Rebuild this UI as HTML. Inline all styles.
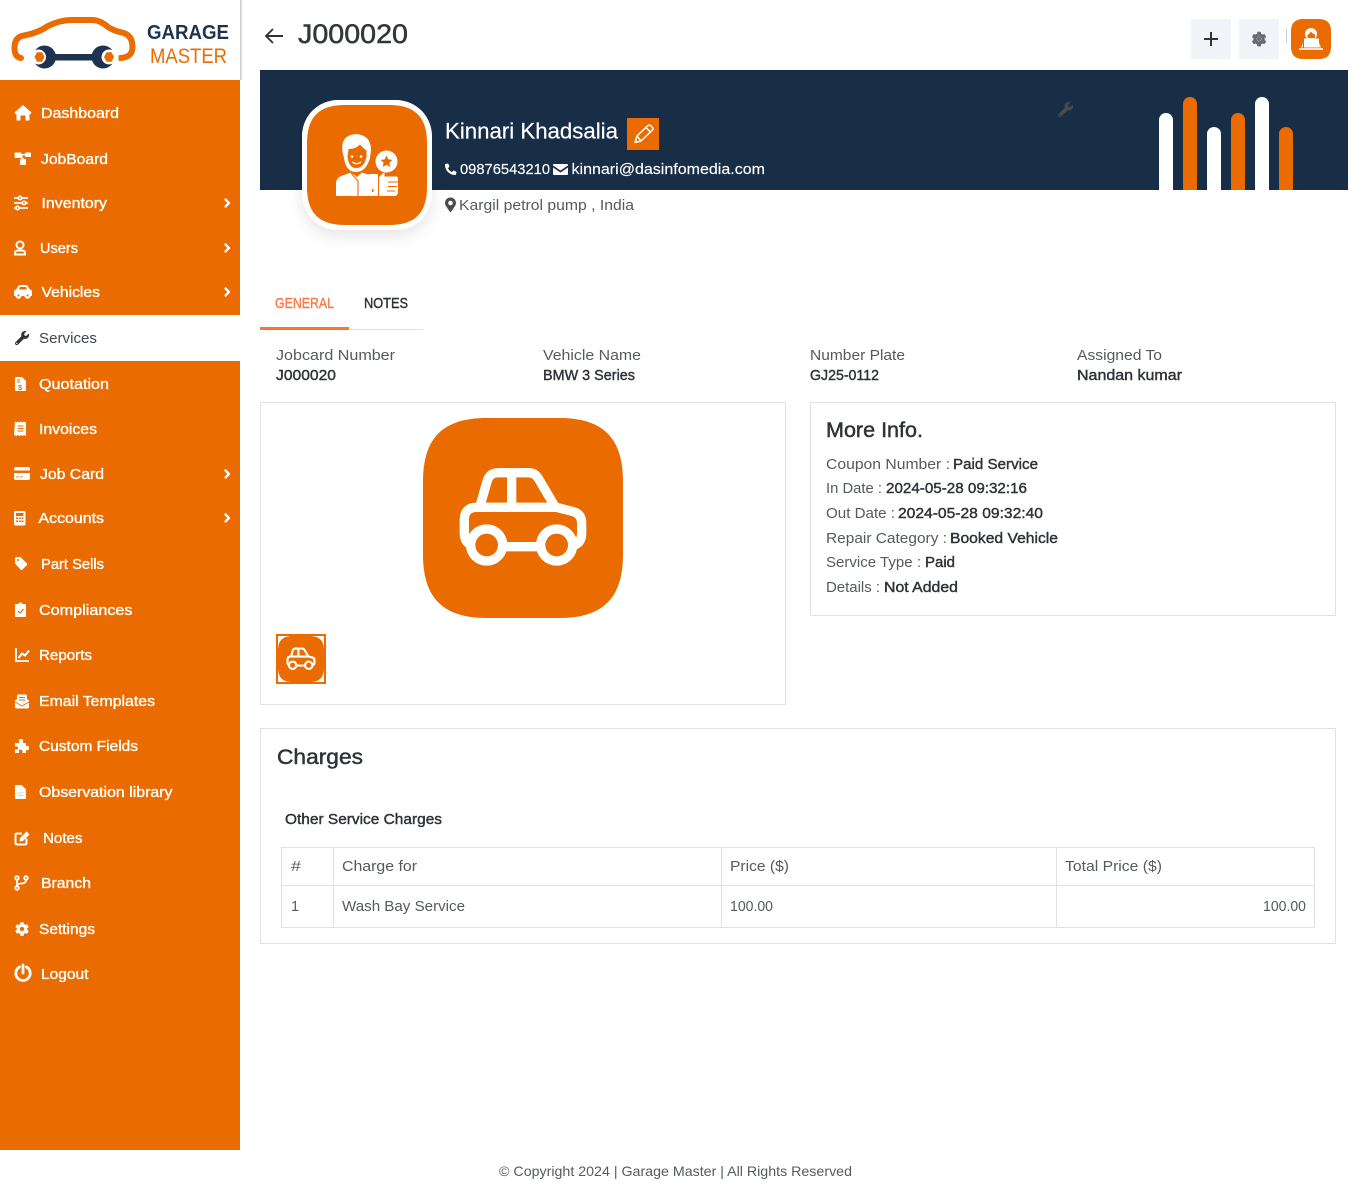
<!DOCTYPE html>
<html lang="en"><head><meta charset="utf-8"><title>J000020 - Garage Master</title>
<style>
html,body{margin:0;padding:0;background:#fff;width:1366px;height:1190px;overflow:hidden}
svg{display:block}
text{font-family:"Liberation Sans",sans-serif;white-space:pre}
.n{font-size:14.5px;fill:#fff;stroke:#fff;stroke-width:.35}
.l{font-size:14.5px;fill:#555a60}
.v{font-size:14.5px;fill:#2e3238;stroke:#2e3238;stroke-width:.4}
.h{font-size:21px;fill:#2e3238;stroke:#2e3238;stroke-width:.45}
</style></head><body>
<svg width="1366" height="1190" viewBox="0 0 1366 1190" xmlns="http://www.w3.org/2000/svg">
<defs>
<linearGradient id="sh"><stop offset="0" stop-color="#c8c8c8"/><stop offset="1" stop-color="#fff"/></linearGradient>
<filter id="ps" x="-30%" y="-30%" width="160%" height="160%"><feDropShadow dx="0" dy="6" stdDeviation="7" flood-color="#000" flood-opacity=".1"/></filter>
<path id="sq" d="M190 0H410C540 0 600 60 600 190V410C600 540 540 600 410 600H190C60 600 0 540 0 410V190C0 60 60 0 190 0Z"/>
<symbol id="car" viewBox="69 54 600 600">
<g fill="none" stroke="#fff" stroke-width="28" stroke-linecap="round" stroke-linejoin="round">
<path d="M241 315L261 245Q268 218 295 218H385Q405 218 415 235L462 315"/>
<path d="M335 218V322"/>
<path d="M205 430Q193 420 193 400V360Q193 322 230 322H470L520 335Q545 342 545 370V400Q545 425 525 435"/>
<path d="M318 440H410"/>
<circle cx="260" cy="435" r="48"/><circle cx="470" cy="435" r="48"/>
</g></symbol>
<path id="wr" d="M507.73 109.1c-2.24-9.03-13.54-12.09-20.12-5.51l-74.36 74.36-67.88-11.31-11.31-67.88 74.36-74.36c6.62-6.62 3.43-17.9-5.66-20.16-47.38-11.74-99.55.91-136.58 37.93-39.64 39.64-50.55 97.1-34.05 147.2L18.74 402.76c-24.99 24.99-24.99 65.51 0 90.5 24.99 24.99 65.51 24.99 90.5 0l213.21-213.21c50.12 16.71 107.47 5.68 147.37-34.22 37.07-37.07 49.7-89.32 37.91-136.73zM64 472c-13.25 0-24-10.75-24-24 0-13.26 10.75-24 24-24s24 10.74 24 24c0 13.25-10.75 24-24 24z"/>
<path id="cog" d="M487.4 315.7l-42.6-24.6c4.3-23.2 4.3-47 0-70.2l42.6-24.6c4.9-2.8 7.1-8.6 5.5-14-11.1-35.6-30-67.8-54.7-94.6-3.8-4.1-10-5.1-14.8-2.3L380.8 110c-17.9-15.4-38.5-27.3-60.8-35.1V25.8c0-5.6-3.9-10.5-9.4-11.7-36.7-8.2-74.3-7.8-109.2 0-5.5 1.2-9.4 6.1-9.4 11.7V75c-22.2 7.9-42.8 19.8-60.8 35.1L88.7 85.5c-4.9-2.8-11-1.9-14.8 2.3-24.7 26.7-43.6 58.9-54.7 94.6-1.7 5.4.6 11.2 5.5 14L67.3 221c-4.3 23.2-4.3 47 0 70.2l-42.6 24.6c-4.9 2.8-7.1 8.6-5.5 14 11.1 35.6 30 67.8 54.7 94.6 3.8 4.1 10 5.1 14.8 2.3l42.6-24.6c17.9 15.4 38.5 27.3 60.8 35.1v49.2c0 5.6 3.9 10.5 9.4 11.7 36.7 8.2 74.3 7.8 109.2 0 5.5-1.2 9.4-6.1 9.4-11.7v-49.2c22.2-7.9 42.8-19.8 60.8-35.1l42.6 24.6c4.9 2.8 11 1.9 14.8-2.3 24.7-26.7 43.6-58.9 54.7-94.6 1.5-5.5-.7-11.3-5.6-14.1zM256 336c-44.1 0-80-35.9-80-80s35.9-80 80-80 80 35.9 80 80-35.9 80-80 80z"/>
</defs>

<!-- logo -->
<rect x="240" y="0" width="3" height="80" fill="url(#sh)"/>
<path d="M21 58Q14.500 57 14.500 48Q14.500 37 24 35.500Q38 33 48 26Q60 20 72 20H92Q100 20 108 27Q114 31 122 32.500Q132.500 35 132.500 47Q132.500 57.500 120 58" fill="none" stroke="#ea6c00" stroke-width="6" stroke-linecap="round"/>
<rect x="50" y="54" width="46" height="6.500" fill="#1d3350"/>
<circle cx="44.500" cy="57" r="11.500" fill="#1d3350"/>
<circle cx="38.500" cy="57" r="7.500" fill="#fff"/>
<circle cx="103" cy="57" r="11.500" fill="#1d3350"/>
<circle cx="109" cy="57" r="7.500" fill="#fff"/>
<rect x="29" y="50" width="5" height="14" fill="#fff"/><rect x="113.500" y="50" width="5" height="14" fill="#fff"/>
<path d="M34.500 57l2.500-4.800h5l2.500 4.800-2.500 4.800h-5z" fill="#ea6c00"/>
<path d="M104 57l2.500-4.800h5l2.500 4.800-2.500 4.800h-5z" fill="#ea6c00"/>
<text x="147" y="39" font-size="20.500" font-weight="700" fill="#1d3350" textLength="82" lengthAdjust="spacingAndGlyphs">GARAGE</text>
<text x="150" y="63" font-size="21" fill="#ea6c00" textLength="77" lengthAdjust="spacingAndGlyphs">MASTER</text>

<!-- sidebar -->
<rect x="0" y="80" width="240" height="1070" fill="#ea6c00"/>
<rect x="0" y="315" width="240" height="46" fill="#fff"/>
<g class="nav">
<text class="n" x="41" y="118" textLength="78" lengthAdjust="spacingAndGlyphs">Dashboard</text>
<text class="n" x="41" y="164" textLength="67" lengthAdjust="spacingAndGlyphs">JobBoard</text>
<text class="n" x="41.500" y="208" textLength="65.500" lengthAdjust="spacingAndGlyphs">Inventory</text>
<text class="n" x="40" y="253" textLength="38" lengthAdjust="spacingAndGlyphs">Users</text>
<text class="n" x="41.500" y="297" textLength="58.500" lengthAdjust="spacingAndGlyphs">Vehicles</text>
<text x="39" y="343" font-size="14.500" fill="#3f4652" textLength="58" lengthAdjust="spacingAndGlyphs">Services</text>
<text class="n" x="39" y="389" textLength="70" lengthAdjust="spacingAndGlyphs">Quotation</text>
<text class="n" x="39" y="434" textLength="58" lengthAdjust="spacingAndGlyphs">Invoices</text>
<text class="n" x="40" y="479" textLength="64" lengthAdjust="spacingAndGlyphs">Job Card</text>
<text class="n" x="38.500" y="523" textLength="65.500" lengthAdjust="spacingAndGlyphs">Accounts</text>
<text class="n" x="41" y="569" textLength="63" lengthAdjust="spacingAndGlyphs">Part Sells</text>
<text class="n" x="39" y="615" textLength="93.500" lengthAdjust="spacingAndGlyphs">Compliances</text>
<text class="n" x="39" y="660" textLength="53" lengthAdjust="spacingAndGlyphs">Reports</text>
<text class="n" x="39" y="706" textLength="116" lengthAdjust="spacingAndGlyphs">Email Templates</text>
<text class="n" x="39" y="751" textLength="99" lengthAdjust="spacingAndGlyphs">Custom Fields</text>
<text class="n" x="39" y="797" textLength="133.500" lengthAdjust="spacingAndGlyphs">Observation library</text>
<text class="n" x="43" y="843" textLength="39.500" lengthAdjust="spacingAndGlyphs">Notes</text>
<text class="n" x="41" y="888" textLength="50" lengthAdjust="spacingAndGlyphs">Branch</text>
<text class="n" x="39" y="934" textLength="56" lengthAdjust="spacingAndGlyphs">Settings</text>
<text class="n" x="41" y="979" textLength="47.500" lengthAdjust="spacingAndGlyphs">Logout</text>
</g>

<!-- sidebar icons -->
<path d="M14.500 112.500L23 105L31.500 112.500L30 114.500L29.500 114V120.500H25.500V115.500H20.500V120.500H16.500V114L16 114.500Z" fill="#fff"/>
<g fill="#fff"><rect x="14.500" y="152.500" width="7" height="5.500" rx="1"/><rect x="25" y="152.500" width="6" height="4.500" rx="1"/><rect x="20" y="159" width="6" height="6" rx="1"/><path d="M21 154h5v1.500h-5zM20 156l1.500-1 3 5-1.500 1z"/></g>
<g stroke="#fff" stroke-width="1.700" fill="#ea6c00"><path d="M14 198H28M14 203H28M14 208H28"/><circle cx="20" cy="198" r="1.700"/><circle cx="24" cy="203" r="1.700"/><circle cx="17.500" cy="208" r="1.700"/></g>
<g fill="none" stroke="#fff" stroke-width="2"><circle cx="20" cy="245" r="3.500"/><path d="M15 254.500V253Q15 250.500 18 250.500H22Q25 250.500 25 253V254.500Z"/></g>
<g fill="#fff"><path d="M14 296V292Q14 290 16 289.500L18 286.500Q18.500 285 20 285H26Q27.500 285 28 286.500L30 289.500Q32 290 32 292V296Z"/><circle cx="18.500" cy="295.500" r="3.200"/><circle cx="27.500" cy="295.500" r="3.200"/></g>
<path d="M19 289.500L20 287H26L27 289.500Z" fill="#ea6c00"/><circle cx="18.500" cy="295.500" r="1" fill="#ea6c00"/><circle cx="27.500" cy="295.500" r="1" fill="#ea6c00"/>
<use href="#wr" transform="translate(15 331) scale(.0275)" fill="#2d3238"/>
<path d="M15 378.500Q15 377 16.500 377H22L26 381V390Q26 391 25 391H16Q15 391 15 390Z" fill="#fff"/>
<path d="M17 379.500h3v1h-3zM17 381.500h3v1h-3z" fill="#ea6c00"/><text x="18" y="390" font-size="7.500" font-weight="700" fill="#ea6c00">$</text>
<path d="M15 421.500l1.500 1 1.500-1 1.500 1 1.500-1 1.500 1 1.500-1 1.500 1 .5-1V436l-2-1-1.500 1-1.500-1-1.500 1-1.500-1-1.500 1-1.500-1-1 1Z" fill="#fff"/>
<path d="M17.500 425.500h6v1h-6zM17.500 428h6v1h-6zM17.500 430.500h6v1h-6z" fill="#ea6c00"/>
<rect x="14" y="467" width="16" height="13" rx="2" fill="#fff"/><path d="M14 470.500h16v2.500H14z" fill="#ea6c00"/><path d="M16 476.500h3v.8h-3zM20 476.500h3v.8h-3z" fill="#ea6c00"/>
<rect x="14" y="511" width="11.500" height="14.500" rx="1.500" fill="#fff"/>
<path d="M16 513h7.500v3H16zM16 517.500h2v1.500h-2zM18.800 517.500h2v1.500h-2zM21.500 517.500h2v1.500h-2zM16 520.500h2v1.500h-2zM18.800 520.500h2v1.500h-2zM21.500 520.500h2v1.500h-2z" fill="#ea6c00"/>
<path d="M15 558.500Q15 557 16.500 557H20.500L27 563.500Q27.500 564.500 27 565L22.500 569.500Q21.500 570.500 20.500 569.500L15 563.500Z" fill="#fff"/><circle cx="18" cy="560" r="1" fill="#ea6c00"/>
<path d="M15 605Q15 604 16 604H18.500Q19 602.500 20.500 602.500T22.500 604H25Q26 604 26 605V616Q26 617 25 617H16Q15 617 15 616Z" fill="#fff"/><path d="M18 611l2 2 3.500-4" fill="none" stroke="#ea6c00" stroke-width="1.200"/>
<path d="M16 648V661H29" fill="none" stroke="#fff" stroke-width="1.800"/><path d="M18.500 658l3.500-4.500 3 2 4-5" fill="none" stroke="#fff" stroke-width="2"/>
<path d="M15 700.500L17 699V696Q17 694.500 18.500 694.500H25.500Q27 694.500 27 696V699L29 700.500V707Q29 708.500 27.500 708.500H16.500Q15 708.500 15 707Z" fill="#fff"/><path d="M19 697h6v1h-6zM19 699.500h6v1h-6z" fill="#ea6c00"/><path d="M15 702l7 4 7-4" fill="none" stroke="#ea6c00" stroke-width=".8"/>
<path d="M15 743H19Q19 742 19 741.500Q18 739 21 739T23 741.500V743H26V746Q29 745 29 748T26 750V753H22.500V751Q22 749.500 20.500 749.500T19 751V753H15V749.500Q18 750 18 748T15 746.500Z" fill="#fff"/>
<path d="M15 786Q15 785 16 785H21.500L26 789.500V798Q26 799 25 799H16Q15 799 15 798Z" fill="#fff"/><path d="M18 792.500h5.500v1H18zM18 795h5.500v1H18z" fill="#fbc79c"/>
<path d="M22 833.500H17Q15.500 833.500 15.500 835V843Q15.500 844.500 17 844.500H25Q26.500 844.500 26.500 843V838.500" fill="none" stroke="#fff" stroke-width="2"/><path d="M19.500 841.500L20 838L26.500 831.500L29.500 834.500L23 841Z" fill="#fff"/>
<g fill="none" stroke="#fff" stroke-width="1.800"><circle cx="17" cy="878" r="1.800"/><circle cx="17" cy="888" r="1.800"/><circle cx="26" cy="878" r="1.800"/><path d="M17 880V886M26 880Q26 883.500 21 883.500Q17 883.500 17 886"/></g>
<use href="#cog" transform="translate(15 922) scale(.0275)" fill="#fff"/>
<path d="M19.500 967A7.200 7.200 0 1 0 26.500 967" fill="none" stroke="#fff" stroke-width="2.800" stroke-linecap="round"/><path d="M23 965V973" stroke="#fff" stroke-width="2.800" stroke-linecap="round"/>
<g fill="none" stroke="#fff" stroke-width="2.300" stroke-linecap="round" stroke-linejoin="round">
<path d="M225.500 199.500L229 203L225.500 206.500"/><path d="M225.500 244.500L229 248L225.500 251.500"/><path d="M225.500 288.500L229 292L225.500 295.500"/><path d="M225.500 470.500L229 474L225.500 477.500"/><path d="M225.500 514.500L229 518L225.500 521.500"/>
</g>

<!-- header -->
<path d="M283 36H266M273 29L266 36L273 43" fill="none" stroke="#333" stroke-width="1.900"/>
<text x="298" y="43" font-size="27" fill="#33373d" stroke="#33373d" stroke-width=".5" textLength="110" lengthAdjust="spacingAndGlyphs">J000020</text>
<rect x="1191" y="19" width="40" height="40" rx="2" fill="#f1f4f9"/>
<path d="M1204 39H1218M1211 32V46" stroke="#333" stroke-width="2"/>
<rect x="1239" y="19" width="40" height="40" rx="2" fill="#f1f4f9"/>
<use href="#cog" transform="translate(1251.500 31.500) scale(.0295)" fill="#66696e"/>
<circle cx="1259" cy="39" r="2" fill="#66696e"/>
<rect x="1286" y="29" width="1" height="14" fill="#ccc"/>
<use href="#sq" transform="translate(1291 19) scale(.0667)" fill="#ea6c00"/>
<circle cx="1311" cy="34" r="6" fill="#fff"/>
<path d="M1307.500 38V35Q1309.500 34 1311 31.500Q1313 34 1315 34.500V38Z" fill="#ea6c00"/>
<rect x="1304" y="38.500" width="15" height="9" fill="#fff"/><rect x="1299" y="48" width="24" height="2" fill="#fde0c4"/>
<path d="M1301 47.500l2-5v5zM1321 47.500l-2-5v5z" fill="#fff" opacity=".8"/>

<!-- banner -->
<rect x="260" y="70" width="1088" height="120" fill="#182e47"/>
<use href="#wr" transform="translate(1058 102) scale(.0295)" fill="#4b4b4b"/>
<g>
<path d="M1159 190V120a7 7 0 0 1 14 0V190Z" fill="#fff"/>
<path d="M1183 190V104a7 7 0 0 1 14 0V190Z" fill="#ea6c00"/>
<path d="M1207 190V134a7 7 0 0 1 14 0V190Z" fill="#fff"/>
<path d="M1231 190V120a7 7 0 0 1 14 0V190Z" fill="#ea6c00"/>
<path d="M1255 190V104a7 7 0 0 1 14 0V190Z" fill="#fff"/>
<path d="M1279 190V134a7 7 0 0 1 14 0V190Z" fill="#ea6c00"/>
</g>

<!-- profile -->
<rect x="302" y="100" width="130" height="130" rx="36" fill="#fff" filter="url(#ps)"/>
<use href="#sq" transform="translate(307 105) scale(.2)" fill="#ea6c00"/>
<g>
<path d="M342.500 152Q340 135 356 134Q371 135 371 150L370 158Q366 172 356 172Q346 172 344 158Z" fill="#fff"/>
<path d="M348.500 149Q356 149 360 144.500Q364 149 366.500 150.500V157Q364 168 356 168Q349 168 347.500 157Z" fill="#ea6c00"/>
<circle cx="352" cy="156.500" r="1.300" fill="#fff"/><circle cx="361" cy="156.500" r="1.300" fill="#fff"/>
<path d="M352.500 162Q356.500 165.500 361 162" fill="none" stroke="#fff" stroke-width="1.300"/>
<path d="M336 196V184Q336 177 344 175L351 172.500L357 177L362 172.500L368 174.500V196Z" fill="#fff"/>
<path d="M351 173L358 181V196" fill="none" stroke="#ea6c00" stroke-width="1.100"/>
<rect x="368" y="174" width="10" height="22" rx="1" fill="#fff"/>
<path d="M369.500 175.500h7v17h-7z" fill="#fff"/><rect x="372" y="189" width="1.500" height="3" fill="#ea6c00"/>
<path d="M379 177L384.500 172V176.500H396Q398 176.500 398 179V192Q398 196 394 196H379Z" fill="#fff"/>
<path d="M388 182h10M388 186.500h9M387 191h8" stroke="#ea6c00" stroke-width=".9" fill="none"/>
<circle cx="386.500" cy="161.500" r="11" fill="#fff"/>
<path d="M386.500 155.500l1.800 3.900 4.200.5-3.100 2.900.8 4.200-3.700-2.100-3.700 2.100.8-4.200-3.100-2.900 4.200-.5Z" fill="#ea6c00"/>
</g>
<text x="445" y="138.500" font-size="22" fill="#fff" stroke="#fff" stroke-width=".2" textLength="173" lengthAdjust="spacingAndGlyphs">Kinnari Khadsalia</text>
<rect x="627" y="118" width="32" height="32" fill="#ea6c00"/>
<g fill="none" stroke="#fff" stroke-width="1.500" stroke-linejoin="round"><path d="M635 142.500L637 136L648 125.500Q649.500 124.500 651 126L652.500 127.500Q653.500 129 652 130.500L641 141Z"/><path d="M637 136L641 141M646 127.500L650.500 132"/></g>
<path d="M635 142.500l.8-2.800 2 2z" fill="#fff"/>
<path transform="translate(456.500 163.500) scale(-.0225 .0225)" d="M493.400 24.600l-104-24c-11.300-2.600-22.900 3.300-27.500 13.900l-48 112c-4.200 9.800-1.400 21.300 6.900 28l60.600 49.600c-36 76.700-98.900 140.500-177.200 177.200l-49.600-60.600c-6.800-8.300-18.200-11.100-28-6.900l-112 48C3.900 366.500-2 378.100.6 389.400l24 104C27.100 504.200 36.700 512 48 512c256.100 0 464-207.500 464-464 0-11.200-7.700-20.900-18.600-23.400z" fill="#fff"/>
<text x="460" y="174" font-size="15" fill="#fff" stroke="#fff" stroke-width=".15" textLength="90" lengthAdjust="spacingAndGlyphs">09876543210</text>
<path d="M553.500 164H567Q568 164 568 165V165.500L560.500 170.500L553 165.500V165Q553 164 553.500 164ZM553 167.500L560.500 172.500L568 167.500V174Q568 175 567 175H554Q553 175 553 174Z" fill="#fff"/>
<text x="571.500" y="174" font-size="15" fill="#fff" stroke="#fff" stroke-width=".15" textLength="193.500" lengthAdjust="spacingAndGlyphs">kinnari@dasinfomedia.com</text>
<path transform="translate(445 197.500) scale(.0286)" d="M172.268 501.670C26.970 291.031 0 260.703 0 192 0 85.961 85.961 0 192 0s192 85.961 192 192c0 68.703-26.970 99.031-172.268 309.670-9.535 13.774-29.930 13.773-39.464 0zM192 272c44.183 0 80-35.817 80-80s-35.817-80-80-80-80 35.817-80 80 35.817 80 80 80z" fill="#4c4c4c"/>
<text class="l" x="459" y="210" textLength="175" lengthAdjust="spacingAndGlyphs">Kargil petrol pump , India</text>

<!-- tabs -->
<text x="275" y="308" font-size="14.500" fill="#fb7a45" stroke="#fb7a45" stroke-width=".4" textLength="59" lengthAdjust="spacingAndGlyphs">GENERAL</text>
<text x="364" y="308" font-size="14.500" fill="#2c323a" stroke="#2c323a" stroke-width=".4" textLength="44" lengthAdjust="spacingAndGlyphs">NOTES</text>
<rect x="260" y="329" width="163" height="1" fill="#dfe3e8"/>
<rect x="260" y="327" width="89" height="3" fill="#fb7430"/>

<!-- info row -->
<text class="l" x="276" y="360" textLength="119" lengthAdjust="spacingAndGlyphs">Jobcard Number</text>
<text class="v" x="276" y="380" textLength="60" lengthAdjust="spacingAndGlyphs">J000020</text>
<text class="l" x="543" y="360" textLength="98" lengthAdjust="spacingAndGlyphs">Vehicle Name</text>
<text class="v" x="543" y="380" textLength="92" lengthAdjust="spacingAndGlyphs">BMW 3 Series</text>
<text class="l" x="810" y="360" textLength="95" lengthAdjust="spacingAndGlyphs">Number Plate</text>
<text class="v" x="810" y="380" textLength="69" lengthAdjust="spacingAndGlyphs">GJ25-0112</text>
<text class="l" x="1077" y="360" textLength="85" lengthAdjust="spacingAndGlyphs">Assigned To</text>
<text class="v" x="1077" y="380" textLength="105" lengthAdjust="spacingAndGlyphs">Nandan kumar</text>

<!-- image card -->
<rect x="260.500" y="402.500" width="525" height="302" fill="#fff" stroke="#dfe3e8"/>
<use href="#sq" transform="translate(423 418) scale(.3333)" fill="#ea6c00"/>
<use href="#car" x="423" y="418" width="200" height="200"/>
<rect x="277" y="635" width="48" height="48" fill="#fff" stroke="#ea6c00" stroke-width="2"/>
<use href="#sq" transform="translate(278 636) scale(.0767)" fill="#ea6c00"/>
<use href="#car" x="278" y="636" width="46" height="46"/>

<!-- more info -->
<rect x="810.500" y="402.500" width="525" height="213" fill="#fff" stroke="#dfe3e8"/>
<text class="h" x="826" y="437" textLength="97" lengthAdjust="spacingAndGlyphs">More Info.</text>
<text class="l" x="826" y="469" textLength="124" lengthAdjust="spacingAndGlyphs">Coupon Number :</text><text class="v" x="953" y="469" textLength="85" lengthAdjust="spacingAndGlyphs">Paid Service</text>
<text class="l" x="826" y="493" textLength="56" lengthAdjust="spacingAndGlyphs">In Date :</text><text class="v" x="886" y="493" textLength="141" lengthAdjust="spacingAndGlyphs">2024-05-28 09:32:16</text>
<text class="l" x="826" y="518" textLength="69" lengthAdjust="spacingAndGlyphs">Out Date :</text><text class="v" x="898" y="518" textLength="145" lengthAdjust="spacingAndGlyphs">2024-05-28 09:32:40</text>
<text class="l" x="826" y="543" textLength="121" lengthAdjust="spacingAndGlyphs">Repair Category :</text><text class="v" x="950" y="543" textLength="108" lengthAdjust="spacingAndGlyphs">Booked Vehicle</text>
<text class="l" x="826" y="567" textLength="95" lengthAdjust="spacingAndGlyphs">Service Type :</text><text class="v" x="925" y="567" textLength="30" lengthAdjust="spacingAndGlyphs">Paid</text>
<text class="l" x="826" y="592" textLength="54" lengthAdjust="spacingAndGlyphs">Details :</text><text class="v" x="884" y="592" textLength="74" lengthAdjust="spacingAndGlyphs">Not Added</text>

<!-- charges -->
<rect x="260.500" y="728.500" width="1075" height="215" fill="#fff" stroke="#dfe3e8"/>
<text class="h" x="277" y="764" textLength="86" lengthAdjust="spacingAndGlyphs">Charges</text>
<text class="v" x="285" y="824" textLength="157" lengthAdjust="spacingAndGlyphs">Other Service Charges</text>
<g fill="none" stroke="#dfe3e8">
<rect x="281.500" y="847.500" width="1033" height="80"/>
<path d="M281.500 885.500H1314.500M333.500 847.500V927.500M721.500 847.500V927.500M1056.500 847.500V927.500"/>
</g>
<text class="l" x="291" y="871" textLength="10" lengthAdjust="spacingAndGlyphs">#</text>
<text class="l" x="342" y="871" textLength="75" lengthAdjust="spacingAndGlyphs">Charge for</text>
<text class="l" x="730" y="871" textLength="59" lengthAdjust="spacingAndGlyphs">Price ($)</text>
<text class="l" x="1065" y="871" textLength="97" lengthAdjust="spacingAndGlyphs">Total Price ($)</text>
<text class="l" x="291" y="911">1</text>
<text class="l" x="342" y="911" textLength="123" lengthAdjust="spacingAndGlyphs">Wash Bay Service</text>
<text class="l" x="730" y="911" textLength="43" lengthAdjust="spacingAndGlyphs">100.00</text>
<text class="l" x="1263" y="911" textLength="43" lengthAdjust="spacingAndGlyphs">100.00</text>

<!-- footer -->
<text x="499" y="1176" font-size="14" fill="#555a60" textLength="353" lengthAdjust="spacingAndGlyphs">© Copyright 2024 | Garage Master | All Rights Reserved</text>
</svg>
</body></html>
